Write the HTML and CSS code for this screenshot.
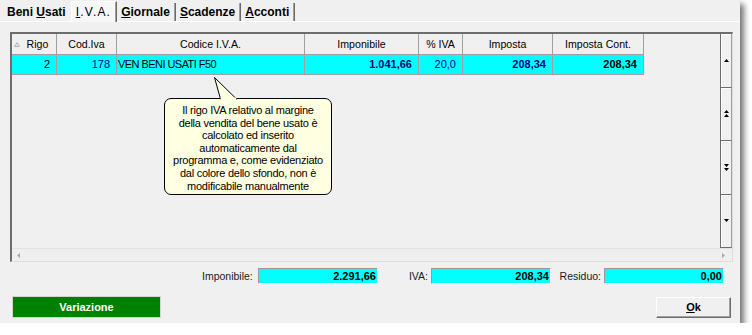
FILE: index.html
```html
<!DOCTYPE html>
<html lang="it">
<head>
<meta charset="utf-8">
<title>I.V.A.</title>
<link rel="stylesheet" href="styles.css">
</head>
<body>
<div class="window">
  <div class="tabs">
    <div class="tab">Beni <u>U</u>sati</div>
    <div class="tab active"><u>I</u>.V.A.</div>
    <div class="tab"><u>G</u>iornale</div>
    <div class="tab"><u>S</u>cadenze</div>
    <div class="tab"><u>A</u>cconti</div>
  </div>
  <div class="panel">
    <div class="grid">
      <div class="cells">
        <div class="row head">
          <div class="c c-rigo"><svg class="sort" width="6" height="5" viewBox="0 0 6 5"><path d="M3 0.5 L5.5 4.5 L0.5 4.5 Z" fill="#e4e4e4" stroke="#b4b4b4" stroke-width="1"/></svg>Rigo</div>
          <div class="c">Cod.Iva</div>
          <div class="c">Codice I.V.A.</div>
          <div class="c">Imponibile</div>
          <div class="c">% IVA</div>
          <div class="c">Imposta</div>
          <div class="c">Imposta Cont.</div>
        </div>
        <div class="row data">
          <div class="c num">2</div>
          <div class="c num blue">178</div>
          <div class="c txt">VEN BENI USATI F50</div>
          <div class="c num bold navy">1.041,66</div>
          <div class="c num blue">20,0</div>
          <div class="c num bold navy">208,34</div>
          <div class="c num bold">208,34</div>
        </div>
      </div>
      <div class="vscroll">
        <div class="sb"><svg width="5" height="3" viewBox="0 0 5 3"><path d="M2.5 0 L5 3 L0 3 Z" fill="#000"/></svg></div>
        <div class="sb"><svg width="5" height="7" viewBox="0 0 5 7"><path d="M2.5 0 L5 3 L0 3 Z M2.5 4 L5 7 L0 7 Z" fill="#000"/></svg></div>
        <div class="sb"><svg width="5" height="7" viewBox="0 0 5 7"><path d="M0 0 L5 0 L2.5 3 Z M0 4 L5 4 L2.5 7 Z" fill="#000"/></svg></div>
        <div class="sb"><svg width="5" height="3" viewBox="0 0 5 3"><path d="M0 0 L5 0 L2.5 3 Z" fill="#000"/></svg></div>
      </div>
      <div class="hscroll">
        <svg width="3" height="5" viewBox="0 0 3 5"><path d="M3 0 L3 5 L0 2.5 Z" fill="#a8a8a8"/></svg>
        <svg width="3" height="5" viewBox="0 0 3 5"><path d="M0 0 L3 2.5 L0 5 Z" fill="#a8a8a8"/></svg>
      </div>
    </div>
    <div class="totals">
      <span class="tl tl-1">Imponibile:</span>
      <span class="tv">2.291,66</span>
      <span class="tl">IVA:</span>
      <span class="tv">208,34</span>
      <span class="tl">Residuo:</span>
      <span class="tv">0,00</span>
    </div>
    <div class="buttons">
      <div class="btn btn-green">Variazione</div>
      <div class="btn btn-ok"><u>O</u>k</div>
    </div>
  </div>
  <div class="tip">Il rigo IVA relativo al margine<br>della vendita del bene usato è<br>calcolato ed inserito<br>automaticamente dal<br>programma e, come evidenziato<br>dal colore dello sfondo, non è<br>modificabile manualmente</div>
  <svg class="tail" width="30" height="26" viewBox="0 0 30 26">
    <path d="M2.5 1.5 L8.5 23 L24.5 23 Z" fill="#ffffe1" stroke="#000" stroke-width="1"/>
    <rect x="8.6" y="21.6" width="15.6" height="3" fill="#ffffe1"/>
  </svg>
</div>
</body>
</html>
```
FILE: styles.css
```css
* {
  box-sizing: border-box;
}

body {
  margin: 0;
  background: #ffffff;
  font-family: "Liberation Sans", Arial, sans-serif;
  color: #000;
}

.window {
  position: relative;
  width: 740px;
  height: 323px;
  background: #f0f0f0;
  box-shadow: 4px 4px 6px rgba(0, 0, 0, 0.55);
  display: flex;
  flex-direction: column;
}

/* Tabs */
.tabs {
  display: flex;
  align-items: flex-end;
  height: 22px;
  padding-left: 3px;
  border-bottom: 1px solid #ffffff;
}

.tab {
  height: 18px;
  line-height: 18px;
  font-size: 12px;
  font-weight: bold;
  padding: 0 5px 0 4px;
  border-right: 1px solid #696969;
  box-shadow: inset -1px 0 #a0a0a0;
  white-space: nowrap;
}

.tab:first-child {
  border-right: none;
  box-shadow: none;
}

.tab.active {
  height: 21px;
  margin-bottom: -1px;
  padding-top: 1px;
  font-weight: normal;
  letter-spacing: 1.2px;
  background: #f7f7f7;
  border-left: 1px solid #ffffff;
  border-top: 1px solid #ffffff;
  line-height: 18px;
}

/* Panel */
.panel {
  flex: 1;
  display: flex;
  flex-direction: column;
  padding: 10px 7px 0 10px;
}

.grid {
  width: 723px;
  height: 230px;
  display: grid;
  grid-template-columns: 708px 12px;
  grid-template-rows: 214px 13px;
  border-top: 2px solid #6d6d6d;
  border-left: 2px solid #6d6d6d;
  border-right: 1px solid #dcdcdc;
  border-bottom: 1px solid #dcdcdc;
  background: #f0f0f0;
  font-size: 11px;
}

.cells {
  grid-column: 1;
  grid-row: 1;
}

.row {
  display: grid;
  grid-template-columns: 45px 60px 188px 114px 44px 90px 91px;
  width: 632px;
}

.c {
  border-right: 1px solid #a0a0a0;
  border-bottom: 1px solid #a0a0a0;
  white-space: nowrap;
  overflow: hidden;
}

.head .c {
  position: relative;
  height: 21px;
  line-height: 20px;
  text-align: center;
  font-size: 10.6px;
  background: #f0f0f0;
}

.head .c-rigo {
  padding-left: 7px;
}

.sort {
  position: absolute;
  left: 2px;
  top: 8px;
}

.data .c {
  height: 20px;
  line-height: 19px;
  background: #00ffff;
}

.num {
  text-align: right;
  padding-right: 6px;
}

.txt {
  padding-left: 1px;
  letter-spacing: -0.55px;
}

.bold {
  font-weight: bold;
}

.blue {
  color: #000099;
}

.navy {
  color: #000080;
}

/* Scrollbars */
.vscroll {
  grid-column: 2;
  grid-row: 1;
  display: flex;
  flex-direction: column;
  border-left: 1px solid #6d6d6d;
}

.sb {
  flex: 1;
  display: flex;
  align-items: center;
  justify-content: center;
  background: #f0f0f0;
  border-bottom: 1px solid #6d6d6d;
  border-right: 1px solid #a0a0a0;
  box-shadow: inset 1px 1px #ffffff;
}

.hscroll {
  grid-column: 1 / span 2;
  grid-row: 2;
  display: flex;
  align-items: center;
  justify-content: space-between;
  padding: 0 7px 0 5px;
  border-top: 1px solid #e2e2e2;
  background: #efefef;
}

/* Totals */
.totals {
  display: flex;
  align-items: center;
  height: 16px;
  margin-top: 6px;
  padding-left: 192px;
}

.tl {
  width: 50px;
  text-align: right;
  font-size: 10.5px;
  color: #1a1a1a;
  margin-right: 3px;
  white-space: nowrap;
}

.tl-1 {
  margin-right: 6px;
}

.tv {
  width: 120px;
  height: 16px;
  line-height: 14px;
  background: #00ffff;
  border: 1px solid;
  border-color: #9a9a9a #ffffff #ffffff #9a9a9a;
  text-align: right;
  padding-right: 1px;
  font-size: 11px;
  font-weight: bold;
}

/* Buttons */
.buttons {
  display: flex;
  justify-content: space-between;
  align-items: flex-start;
  margin-top: 12px;
  padding: 0 2px;
}

.btn {
  height: 22px;
  line-height: 20px;
  text-align: center;
  font-size: 11px;
  font-weight: bold;
}

.btn-green {
  width: 149px;
  background: #008000;
  color: #ffffff;
  border: 1px solid #cfd8cf;
}

.btn-ok {
  width: 75px;
  margin-top: 1px;
  height: 21px;
  line-height: 19px;
  background: #f0f0f0;
  border: 1px solid;
  border-color: #ffffff #6d6d6d #6d6d6d #ffffff;
  box-shadow: inset -1px -1px #a0a0a0;
}

/* Balloon hint */
.tip {
  position: absolute;
  left: 164px;
  top: 98px;
  width: 168px;
  height: 97px;
  padding-top: 5px;
  border: 1px solid #000;
  border-radius: 7px;
  background: #ffffe1;
  font-size: 11px;
  line-height: 12.6px;
  letter-spacing: -0.25px;
  text-align: center;
  white-space: nowrap;
}

.tail {
  position: absolute;
  left: 212px;
  top: 76px;
}
```
